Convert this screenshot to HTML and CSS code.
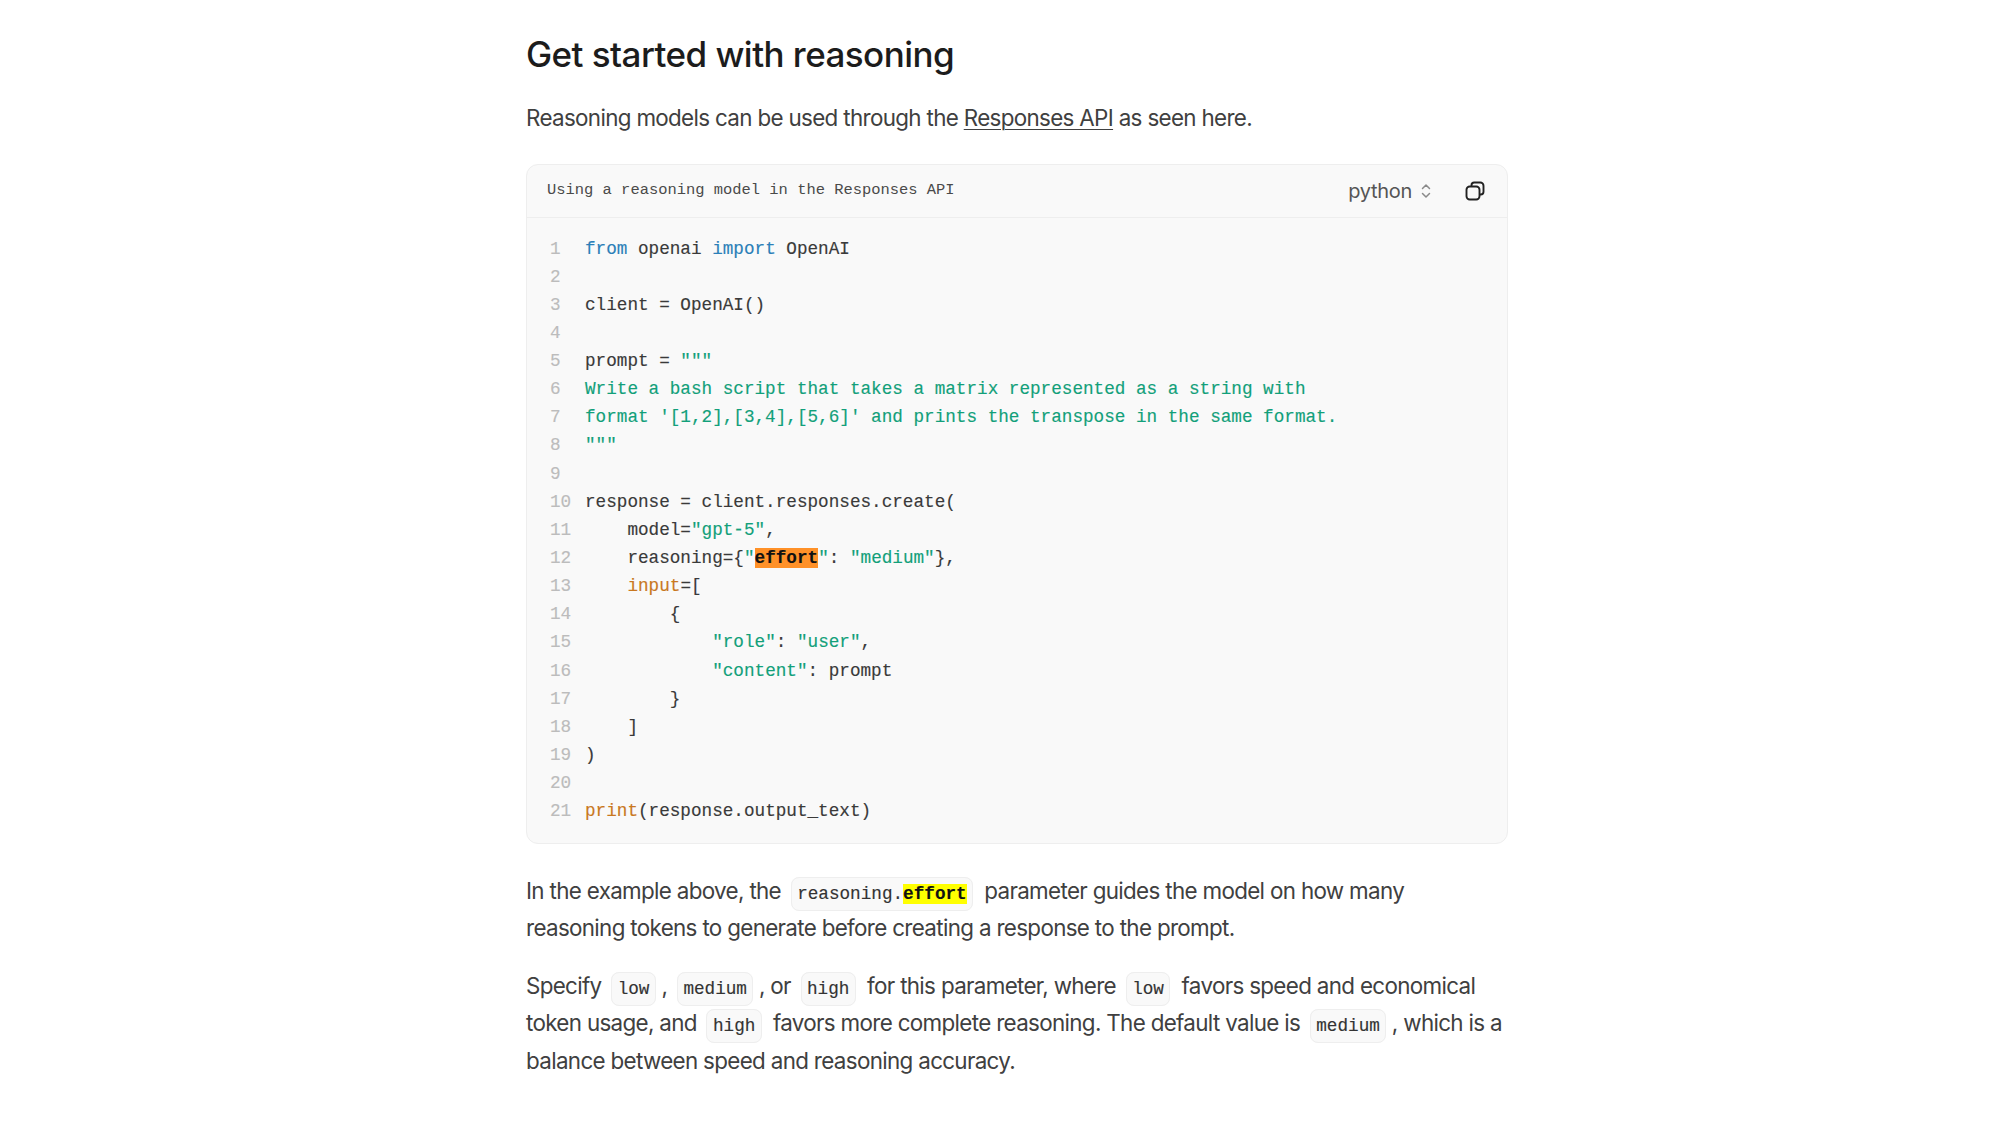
FILE: index.html
```html
<!DOCTYPE html>
<html lang="en">
<head>
<meta charset="utf-8">
<title>Get started with reasoning</title>
<link rel="stylesheet" href="styles.css">
</head>
<body>
<main class="doc">
  <h2 class="title">Get started with reasoning</h2>
  <p class="text intro">Reasoning models can be used through the <a class="link" href="#">Responses API</a> as seen here.</p>
  <section class="card">
    <header class="card-head">
      <span class="card-title">Using a reasoning model in the Responses API</span>
      <span class="lang">python
        <svg class="updown" viewBox="0 0 12 18" width="12" height="18"><path d="M2.5 6.5 6 3l3.500 3.500M2.500 11.500 6 15l3.500-3.500" fill="none" stroke="#8a8a8a" stroke-width="1.500" stroke-linecap="round" stroke-linejoin="round"/></svg>
      </span>
      <svg class="copy" viewBox="0 0 20 20" width="20" height="20"><path d="M6.500 5.500V4.200A2.700 2.700 0 0 1 9.200 1.500h6.100a3.200 3.200 0 0 1 3.200 3.200v6.100a2.700 2.700 0 0 1-2.700 2.700h-1.300" fill="none" stroke="#222" stroke-width="1.900"/><rect x="1.500" y="5.500" width="13" height="13" rx="3.200" fill="none" stroke="#222" stroke-width="1.900"/></svg>
    </header>
    <div class="code">
      <div class="row"><span class="num">1</span><code class="src"><span class="kw">from</span> openai <span class="kw">import</span> OpenAI</code></div>
      <div class="row"><span class="num">2</span><code class="src"></code></div>
      <div class="row"><span class="num">3</span><code class="src">client = OpenAI()</code></div>
      <div class="row"><span class="num">4</span><code class="src"></code></div>
      <div class="row"><span class="num">5</span><code class="src">prompt = <span class="str">"""</span></code></div>
      <div class="row"><span class="num">6</span><code class="src str">Write a bash script that takes a matrix represented as a string with</code></div>
      <div class="row"><span class="num">7</span><code class="src str">format '[1,2],[3,4],[5,6]' and prints the transpose in the same format.</code></div>
      <div class="row"><span class="num">8</span><code class="src str">"""</code></div>
      <div class="row"><span class="num">9</span><code class="src"></code></div>
      <div class="row"><span class="num">10</span><code class="src">response = client.responses.create(</code></div>
      <div class="row"><span class="num">11</span><code class="src">    model=<span class="str">"gpt-5"</span>,</code></div>
      <div class="row"><span class="num">12</span><code class="src">    reasoning={<span class="str">"</span><span class="mark-orange">effort</span><span class="str">"</span>: <span class="str">"medium"</span>},</code></div>
      <div class="row"><span class="num">13</span><code class="src">    <span class="fn">input</span>=[</code></div>
      <div class="row"><span class="num">14</span><code class="src">        {</code></div>
      <div class="row"><span class="num">15</span><code class="src">            <span class="str">"role"</span>: <span class="str">"user"</span>,</code></div>
      <div class="row"><span class="num">16</span><code class="src">            <span class="str">"content"</span>: prompt</code></div>
      <div class="row"><span class="num">17</span><code class="src">        }</code></div>
      <div class="row"><span class="num">18</span><code class="src">    ]</code></div>
      <div class="row"><span class="num">19</span><code class="src">)</code></div>
      <div class="row"><span class="num">20</span><code class="src"></code></div>
      <div class="row"><span class="num">21</span><code class="src"><span class="fn">print</span>(response.output_text)</code></div>
    </div>
  </section>
  <p class="text after-card">In the example above, the <code class="pill">reasoning.<span class="mark-yellow">effort</span></code> parameter guides the model on how many reasoning tokens to generate before creating a response to the prompt.</p>
  <p class="text next">Specify <code class="pill">low</code>, <code class="pill">medium</code>, or <code class="pill">high</code> for this parameter, where <code class="pill">low</code> favors speed and economical token usage, and <code class="pill">high</code> favors more complete reasoning. The default value is <code class="pill">medium</code>, which is a balance between speed and reasoning accuracy.</p>
</main>
</body>
</html>
```
FILE: styles.css
```css
* { box-sizing: border-box; }
html, body { margin: 0; background: #fff; }
body { font-family: Inter, "Noto Sans", sans-serif; color: #3d3d3d; }
.doc { width: 982px; margin-left: 526px; padding-top: 33px; }
.title { margin: 0; font-size: 35px; line-height: 42px; font-weight: 500; letter-spacing: -0.550px; color: #1c1c1c; }
.text { margin: 0; font-size: 22.400px; line-height: 37.500px; letter-spacing: -0.670px; color: #404040; }
.intro { margin-top: 24px; }
.link { color: inherit; text-decoration: underline; text-underline-offset: 3px; text-decoration-thickness: 1px; }
.card { margin-top: 27px; height: 680px; background: #f9f9f9; border: 1.500px solid #eee; border-radius: 12px; overflow: hidden; }
.card-head { height: 53px; display: flex; align-items: center; padding: 0 22px 1px 20px; border-bottom: 1.500px solid #eee; }
.card-title { flex: 1; font-family: "Liberation Mono", monospace; font-size: 15.450px; color: #4a4a4a; }
.lang { display: flex; align-items: center; gap: 8px; font-size: 20px; letter-spacing: -0.300px; color: #555; margin: 2px 33px 0 0; }
.copy { display: block; margin-top: 1px; }
.code { padding-top: 17px; font-family: "Liberation Mono", monospace; font-size: 17.660px; line-height: 28.150px; color: #3a3a3a; -webkit-text-stroke: 0.150px currentColor; }
.row { display: flex; height: 28.150px; }
.num { width: 58px; padding-left: 23px; text-align: left; color: #bcbcbc; flex: none; }
.src { font: inherit; white-space: pre; }
.kw { color: #2b7fb8; }
.str { color: #12a07a; }
.fn { color: #c9781f; }
.mark-orange { background: #ff9128; color: #111; font-weight: 700; }
.mark-yellow { background: #ffff00; color: #111; font-weight: 700; }
.after-card { margin-top: 28px; }
.next { margin-top: 20px; }
.pill { font-family: "Liberation Mono", monospace; font-size: 17.660px; line-height: 1; letter-spacing: 0; color: #333; background: #f9f9f9; border: 1.500px solid #eee; border-radius: 8px; padding: 6px 5.500px; margin: 0 5.500px 0 4px; -webkit-text-stroke: 0.150px currentColor; }
```
